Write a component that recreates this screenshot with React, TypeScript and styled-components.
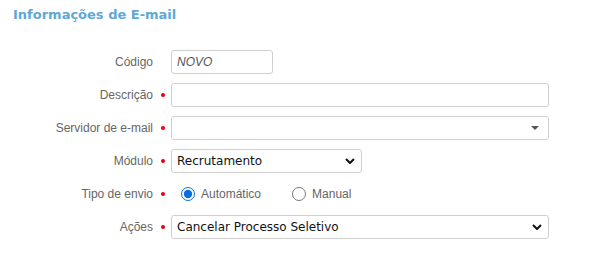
import React from 'react';
import styled, { createGlobalStyle } from 'styled-components';

const GlobalStyle = createGlobalStyle`
  body {
    margin: 0;
    background: #fff;
    font-family: "Liberation Sans", Arial, sans-serif;
  }
`;

const Page = styled.div`
  width: 608px;
  height: 257px;
  padding: 6px 0 0 13px;
  box-sizing: border-box;
  overflow: hidden;
`;

const Title = styled.h2`
  margin: 0;
  font-family: "DejaVu Sans", Verdana, sans-serif;
  font-size: 13px;
  font-weight: bold;
  color: #5ea8d6;
  line-height: 17px;
`;

const Form = styled.div`
  margin-top: 22px;
  display: grid;
  grid-template-columns: 140px 18px 1fr;
  grid-auto-rows: 33px;
  align-items: center;
  width: 536px;
`;

const Label = styled.label`
  text-align: right;
  font-size: 12px;
  color: #666;
`;

const Required = styled.span<{ $on?: boolean }>`
  justify-self: center;
  width: 4px;
  height: 4px;
  border-radius: 50%;
  background: ${p => (p.$on ? '#e8000b' : 'transparent')};
  margin-left: 1px;
`;

const Box = styled.div<{ $width?: number }>`
  position: relative;
  box-sizing: border-box;
  height: 24px;
  width: ${p => (p.$width ? `${p.$width}px` : '378px')};
  border: 1px solid #cfcfcf;
  border-radius: 3px;
  background: #fff;
  display: flex;
  align-items: center;
  padding: 0 5px;
`;

const Placeholder = styled.span`
  font-size: 12px;
  font-style: italic;
  color: #555;
`;

const SelectText = styled.span`
  font-family: "DejaVu Sans", Verdana, sans-serif;
  font-size: 12px;
  color: #111;
  flex: 1;
`;

const Arrow = styled.svg<{ $right?: number }>`
  position: absolute;
  right: ${p => p.$right ?? 6}px;
  top: 50%;
  transform: translateY(-50%);
`;

const Radios = styled.div`
  display: flex;
  align-items: center;
  padding-left: 10px;
`;

const RadioLabel = styled.label`
  display: flex;
  align-items: center;
  gap: 6px;
  font-size: 12px;
  color: #666;
  margin-right: 31px;

  input {
    margin: 0;
    width: 14px;
    height: 14px;
    accent-color: #0a6ee0;
  }
`;

const Chevron = () => (
  <Arrow width="10" height="6" viewBox="0 0 10 6">
    <path d="M1 1l4 4 4-4" fill="none" stroke="#111" strokeWidth="2" />
  </Arrow>
);

const Caret = () => (
  <Arrow width="8" height="4" viewBox="0 0 8 4" $right={9}>
    <path d="M0 0h8L4 4z" fill="#555" />
  </Arrow>
);

export default function App() {
  return (
    <Page>
      <GlobalStyle />
      <Title>Informações de E-mail</Title>
      <Form>
        <Label>Código</Label>
        <Required />
        <Box $width={102}>
          <Placeholder>NOVO</Placeholder>
        </Box>

        <Label>Descrição</Label>
        <Required $on />
        <Box />

        <Label>Servidor de e-mail</Label>
        <Required $on />
        <Box>
          <Caret />
        </Box>

        <Label>Módulo</Label>
        <Required $on />
        <Box $width={191}>
          <SelectText>Recrutamento</SelectText>
          <Chevron />
        </Box>

        <Label>Tipo de envio</Label>
        <Required $on />
        <Radios>
          <RadioLabel>
            <input type="radio" name="tipo" defaultChecked />
            Automático
          </RadioLabel>
          <RadioLabel>
            <input type="radio" name="tipo" />
            Manual
          </RadioLabel>
        </Radios>

        <Label>Ações</Label>
        <Required $on />
        <Box>
          <SelectText>Cancelar Processo Seletivo</SelectText>
          <Chevron />
        </Box>
      </Form>
    </Page>
  );
}
